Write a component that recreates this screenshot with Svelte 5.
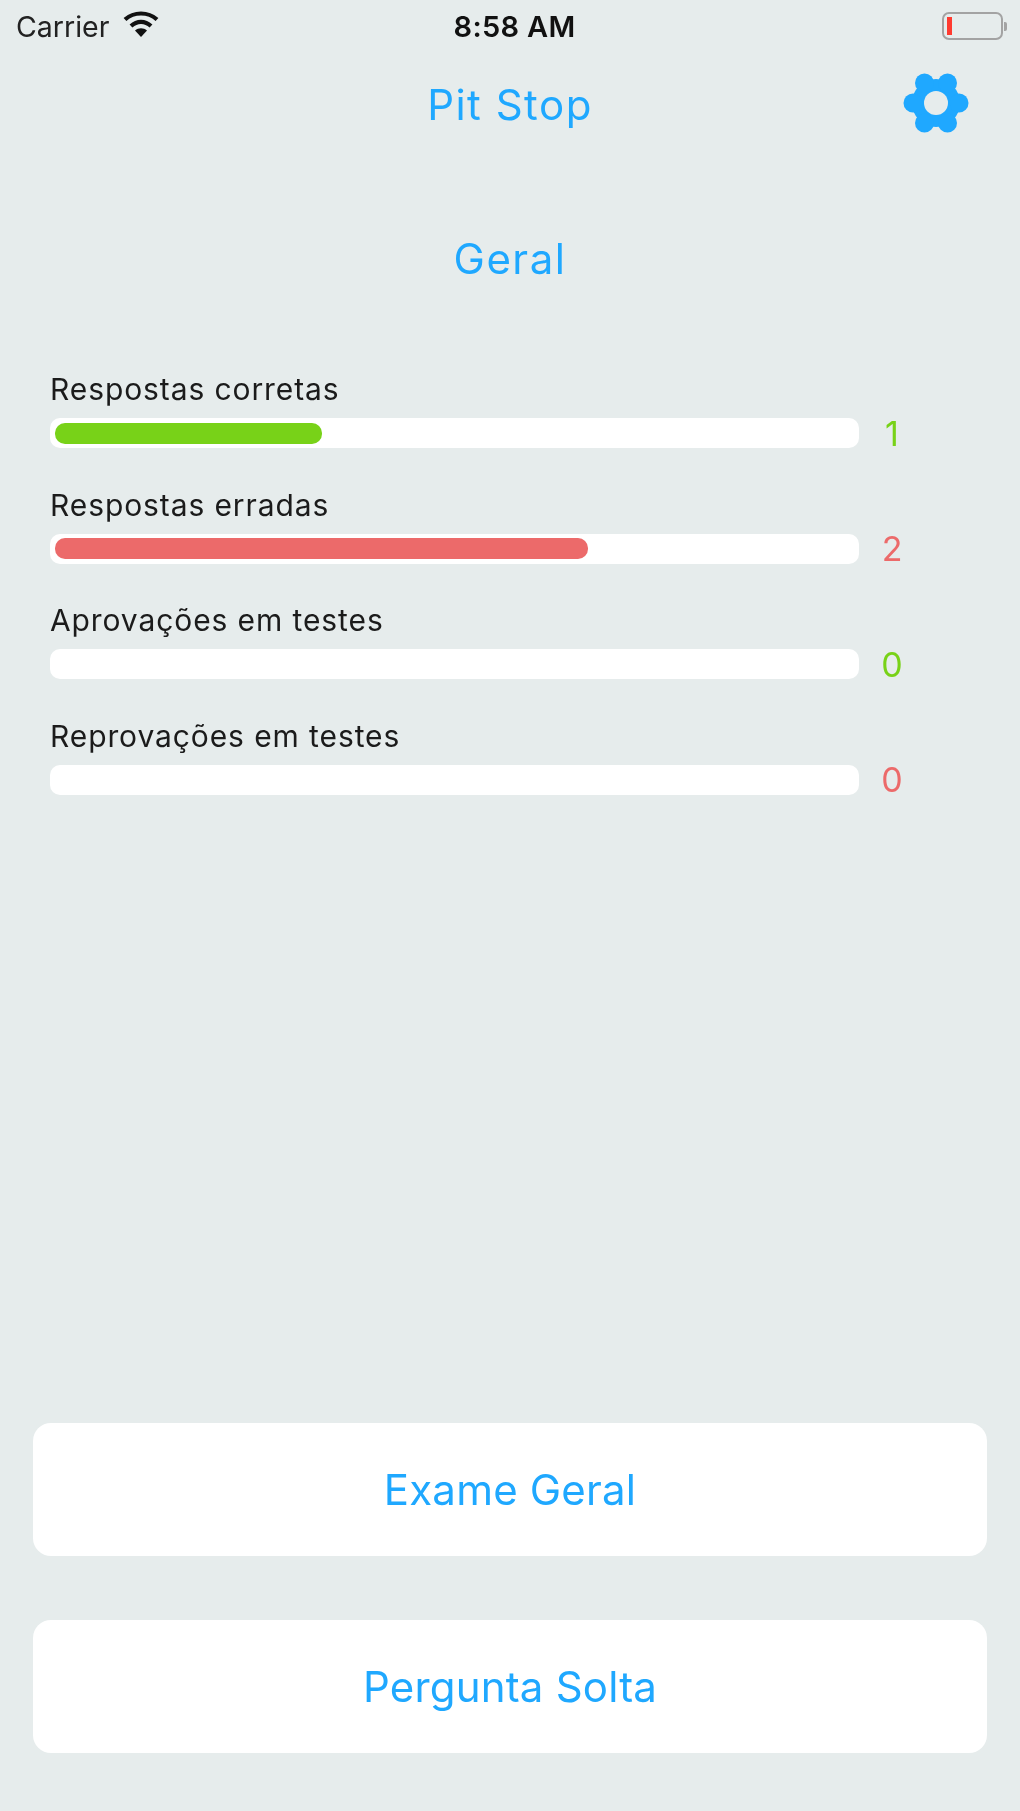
<script>
  const stats = [
    { label: 'Respostas corretas', value: 1, fill: 267, tone: 'good' },
    { label: 'Respostas erradas', value: 2, fill: 533, tone: 'bad' },
    { label: 'Aprovações em testes', value: 0, fill: 0, tone: 'good' },
    { label: 'Reprovações em testes', value: 0, fill: 0, tone: 'bad' }
  ];
  const lobes = [0, 60, 120, 180, 240, 300];
</script>

<div class="screen">
  <header class="status">
    <div class="status-left">
      <span class="carrier">Carrier</span>
      <svg class="wifi" width="36" height="28" viewBox="0 0 36 28">
        <path d="M2 9.5C11 1.5 25 1.5 34 9.5" fill="none" stroke="#111" stroke-width="4.2" />
        <path d="M8 16C14 10.5 22 10.5 28 16" fill="none" stroke="#111" stroke-width="4.2" />
        <path d="M12 20.5C15.5 17.5 20.5 17.5 24 20.5L18 27Z" fill="#111" />
      </svg>
    </div>
    <span class="time">8:58 AM</span>
    <div class="battery">
      <div class="battery-body"><div class="battery-level"></div></div>
      <div class="battery-nub"></div>
    </div>
  </header>

  <nav class="navbar">
    <h1>Pit Stop</h1>
    <svg class="gear" width="70" height="70" viewBox="0 0 70 70" aria-label="Ajustes">
      <g fill="#1fa8ff">
        <circle cx="35" cy="35" r="24" />
        {#each lobes as a}
          <circle cx={35 + 23 * Math.cos((a * Math.PI) / 180)} cy={35 + 23 * Math.sin((a * Math.PI) / 180)} r="9.5" />
        {/each}
      </g>
      <circle cx="35" cy="35" r="12" fill="#e6ecec" />
    </svg>
  </nav>

  <h2 class="section-title">Geral</h2>

  <section class="stats">
    {#each stats as s}
      <div class="stat">
        <div class="stat-label">{s.label}</div>
        <div class="stat-row">
          <div class="track">
            {#if s.fill > 0}
              <div class="fill {s.tone}" style="width: {s.fill}px"></div>
            {/if}
          </div>
          <span class="count {s.tone}">{s.value}</span>
        </div>
      </div>
    {/each}
  </section>

  <div class="actions">
    <button>Exame Geral</button>
    <button>Pergunta Solta</button>
  </div>
</div>

<style>
  :global(body) {
    margin: 0;
    background: #e6ecec;
  }

  .screen {
    width: 1020px;
    height: 1811px;
    display: flex;
    flex-direction: column;
    box-sizing: border-box;
    background: #e6ecec;
    font-family: 'Inter', 'Noto Sans', sans-serif;
    overflow: hidden;
    filter: blur(0.5px);
  }

  .status {
    height: 52px;
    display: grid;
    grid-template-columns: 1fr auto 1fr;
    align-items: center;
    padding: 0 13px 0 16px;
    color: #111;
  }

  .status-left {
    display: flex;
    align-items: center;
    gap: 14px;
  }

  .carrier {
    font-size: 28.5px;
    color: #222;
  }

  .wifi {
    margin-top: -5px;
  }

  .time {
    margin-left: 6px;
    font-size: 29px;
    font-weight: 600;
    letter-spacing: 0.3px;
  }

  .battery {
    justify-self: end;
    display: flex;
    align-items: center;
    gap: 1px;
  }

  .battery-body {
    width: 61px;
    height: 28px;
    box-sizing: border-box;
    border: 2.5px solid #a3a3a3;
    border-radius: 7px;
    padding: 3px;
  }

  .battery-level {
    width: 5px;
    height: 100%;
    background: #ff3b30;
  }

  .battery-nub {
    width: 3px;
    height: 9px;
    background: #a3a3a3;
    border-radius: 0 2px 2px 0;
  }

  .navbar {
    height: 104px;
    position: relative;
    display: flex;
    align-items: center;
    justify-content: center;
  }

  .navbar h1 {
    margin: 0;
    font-size: 42px;
    font-weight: 400;
    letter-spacing: 1.5px;
    color: #1fa8ff;
  }

  .gear {
    position: absolute;
    right: 49px;
    top: 16px;
  }

  .section-title {
    margin: 76px 0 0;
    text-align: center;
    font-size: 42px;
    font-weight: 400;
    letter-spacing: 1.5px;
    line-height: 54px;
    color: #1fa8ff;
  }

  .stats {
    margin-top: 84px;
    padding-left: 50px;
    display: flex;
    flex-direction: column;
    gap: 30.5px;
  }

  .stat-label {
    font-size: 30px;
    letter-spacing: 0.9px;
    line-height: 38px;
    color: #1b1b1b;
  }

  .stat-row {
    margin-top: 3px;
    display: flex;
    align-items: center;
    height: 44px;
  }

  .track {
    width: 809px;
    height: 30px;
    box-sizing: border-box;
    padding: 4.5px 5px;
    background: #fff;
    border-radius: 10px;
  }

  .fill {
    height: 21px;
    border-radius: 10px;
  }

  .fill.good {
    background: #78d218;
  }

  .fill.bad {
    background: #ec6a6a;
  }

  .count {
    width: 66px;
    text-align: center;
    font-size: 34px;
    font-weight: 400;
  }

  .count.good {
    color: #78d218;
  }

  .count.bad {
    color: #ec6a6a;
  }

  .actions {
    margin-top: auto;
    padding: 0 33px 58px;
    display: flex;
    flex-direction: column;
    gap: 64px;
  }

  button {
    height: 133px;
    border: 0;
    border-radius: 18px;
    background: #fff;
    color: #1fa8ff;
    font-family: inherit;
    font-size: 42px;
    font-weight: 400;
    letter-spacing: 0.2px;
    padding: 0;
  }
</style>
